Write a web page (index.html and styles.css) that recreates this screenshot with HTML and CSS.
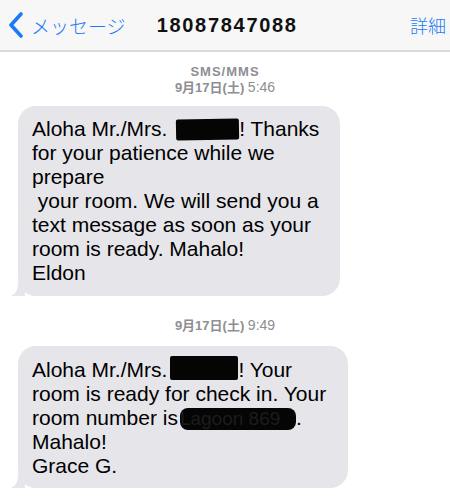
FILE: index.html
```html
<!DOCTYPE html>
<html>
	<head>
		<meta charset="utf-8">
		<title>18087847088</title>
		<link rel="stylesheet" href="styles.css">
	</head>
	<body>
		<header id="nav">
			<a class="back" href="#">
				<svg width="18" height="26" viewBox="0 0 18 26">
					<polyline points="14,2 4,13 14,24" fill="none" stroke="#1a7cf5" stroke-width="3.6" stroke-linecap="round" stroke-linejoin="round"/>
				</svg>
				<span>メッセージ</span>
			</a>
			<h1>18087847088</h1>
			<a class="detail" href="#">詳細</a>
		</header>

		<section id="thread">
			<div class="stamp">
				<div class="kind">SMS/MMS</div>
				<div class="when">9月17日(土) <span class="hour">5:46</span></div>
			</div>

			<div class="row">
				<div class="bubble first">
					Aloha Mr./Mrs. <span class="redact r1"></span>! Thanks<br>
					for your patience while we<br>
					prepare<br>
					&nbsp;your room. We will send you a<br>
					text message as soon as your<br>
					room is ready. Mahalo!<br>
					Eldon
					<svg class="tail" width="14" height="14" viewBox="0 0 14 14">
						<path d="M14,0 L14,14 L0,14 C5,12 7,7 7,0 Z" fill="#e5e5ea"/>
					</svg>
				</div>
			</div>

			<div class="stamp second">
				<div class="when">9月17日(土) <span class="hour">9:49</span></div>
			</div>

			<div class="row">
				<div class="bubble second">
					Aloha Mr./Mrs.<span class="redact r2"></span>! Your<br>
					room is ready for check in. Your<br>
					room number is<span class="redact r3">Lagoon 869</span>.<br>
					Mahalo!<br>
					Grace G.
					<svg class="tail" width="14" height="14" viewBox="0 0 14 14">
						<path d="M14,0 L14,14 L0,14 C5,12 7,7 7,0 Z" fill="#e5e5ea"/>
					</svg>
				</div>
			</div>
		</section>
	</body>
</html>
```

FILE: styles.css
```css
body {
	margin: 0;
	background-color: #fff;
	font-family: "Liberation Sans", Arial, "Noto Sans CJK JP", sans-serif;
	overflow: hidden;
}

#nav {
	display: flex;
	align-items: center;
	height: 50px;
	padding: 0 4px 0 7px;
	background-color: #f7f7f7;
	border-bottom: 2px solid #dadada;
}

#nav a {
	color: #1a7cf5;
	text-decoration: none;
}

#nav .back {
	display: flex;
	align-items: center;
	gap: 6px;
	font-family: "Noto Sans CJK JP", sans-serif;
	font-size: 19px;
	font-weight: 300;
}

#nav h1 {
	margin: 0 0 0 31px;
	flex: 1;
	font-size: 20px;
	letter-spacing: 1.7px;
	color: #111;
}

#nav .detail {
	font-family: "Noto Sans CJK JP", sans-serif;
	font-size: 18px;
	font-weight: 300;
}

#thread {
	padding-top: 12px;
}

.stamp {
	text-align: center;
	color: #8e8e93;
	font-weight: bold;
	line-height: 16px;
	margin-bottom: 10px;
}

.stamp .kind {
	font-size: 13px;
	line-height: 15px;
	letter-spacing: 1px;
}

.stamp .when {
	font-family: "Liberation Sans", "Noto Sans CJK JP", sans-serif;
	font-size: 13px;
}

.stamp .hour {
	font-weight: normal;
	font-size: 14px;
}

.stamp.second {
	margin-top: 21px;
	margin-bottom: 12px;
}

.row {
	padding-left: 18px;
}

.bubble {
	position: relative;
	display: inline-block;
	padding: 11px 22px 11px 14px;
	background-color: #e5e5ea;
	border-radius: 18px;
	font-size: 21px;
	line-height: 24px;
	color: #000;
	white-space: nowrap;
}

.bubble.first {
	padding-right: 21px;
}

.bubble.second {
	padding-top: 10px;
	padding-bottom: 10px;
}

.bubble .tail {
	position: absolute;
	left: -7px;
	bottom: 0;
}

.redact {
	display: inline-block;
	vertical-align: -4px;
	background-color: #050505;
	border-radius: 2px;
}

.redact.r1 {
	width: 63px;
	height: 21px;
	margin-left: 3px;
	transform: rotate(-1deg);
}

.redact.r2 {
	width: 68px;
	height: 24px;
	margin-left: 3px;
	vertical-align: -3px;
}

.redact.r3 {
	width: 116px;
	height: 22px;
	line-height: 22px;
	margin-left: 2px;
	vertical-align: -5px;
	color: #1c1c1c;
	border-radius: 8px;
	font-size: 19px;
	overflow: hidden;
}
```
